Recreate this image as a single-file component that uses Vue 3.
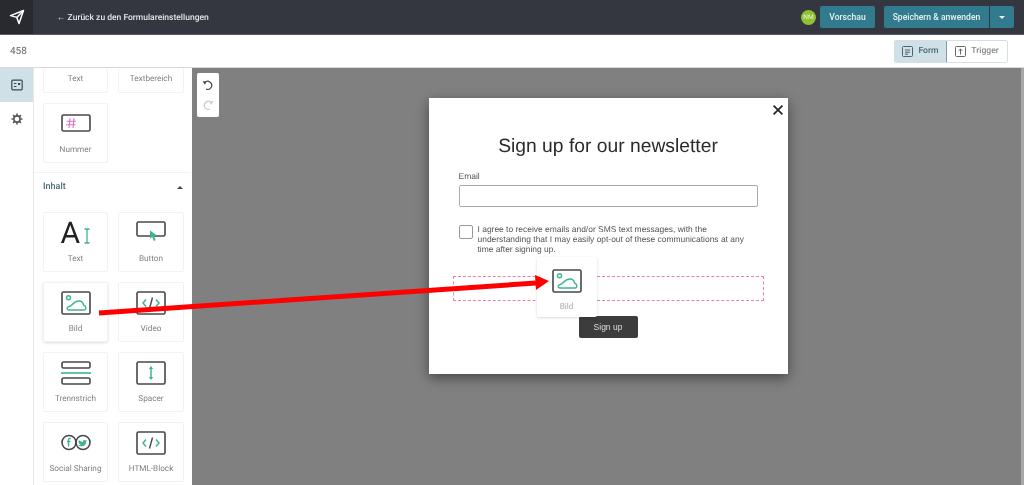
<script setup>
const topTiles = [{ label: 'Text' }, { label: 'Textbereich' }]
const contentTiles = [
  { label: 'Text', icon: 'text' },
  { label: 'Button', icon: 'button' },
  { label: 'Bild', icon: 'image', raised: true },
  { label: 'Video', icon: 'code' },
  { label: 'Trennstrich', icon: 'divider' },
  { label: 'Spacer', icon: 'spacer' },
  { label: 'Social Sharing', icon: 'social' },
  { label: 'HTML-Block', icon: 'code' }
]
const cloud = 'M8 19c-2.200 0-2.600-2.700-.4-3.200 1.700-.3 2.900-1.300 3.900-2.500C13.300 11.200 15.200 10 18 10c2.700 0 4.300 2.200 4.700 4.300 2.900.7 2.800 4.700.3 4.700z'
</script>

<template>
  <div class="page">
    <header class="topbar">
      <div class="logo">
        <svg width="16" height="16" viewBox="0 0 16 16" fill="none" stroke="#fff" stroke-width="1.5" stroke-linejoin="round"><path d="M1.5 6.600 14.500 1.500 10 14.500 7.800 8.400z" /><path d="M7.800 8.400 14.500 1.500" /></svg>
      </div>
      <div class="back">← Zurück zu den Formulareinstellungen</div>
      <div class="avatar">NM</div>
      <button class="teal preview">Vorschau</button>
      <div class="save-group">
        <button class="teal save">Speichern &amp; anwenden</button>
        <button class="teal caret"><span class="caret-down"></span></button>
      </div>
    </header>

    <div class="subbar">
      <span class="form-id">458</span>
      <div class="toggle">
        <div class="toggle-item active">
          <svg width="11" height="11" viewBox="0 0 11 11" fill="none" stroke="#4a6570" stroke-width="1"><rect x="0.5" y="0.500" width="10" height="10" rx="1" /><path d="M3 4h5M3 6.200h5M3 8.200h3" /></svg>
          Form
        </div>
        <div class="toggle-item">
          <svg width="11" height="11" viewBox="0 0 11 11" fill="none" stroke="#666" stroke-width="1"><rect x="0.5" y="0.500" width="10" height="10" rx="1" /><path d="M5.500 8.500V3M3.700 4.800l1.800-1.800 1.800 1.800" /></svg>
          Trigger
        </div>
      </div>
    </div>

    <div class="body">
      <nav class="rail">
        <div class="rail-item selected">
          <svg width="12" height="12" viewBox="0 0 12 12" fill="none" stroke="#3d4a50" stroke-width="1.200"><rect x="0.800" y="1.200" width="10.400" height="9.600" rx="1" /><path d="M2.800 4.500h2.600M2.800 7.500h2.600" /><rect x="7" y="4" width="2.200" height="2" fill="#3d4a50" stroke="none" /></svg>
        </div>
        <div class="rail-item">
          <svg width="12" height="12" viewBox="0 0 12 12" fill="none" stroke="#555" stroke-width="1.600"><circle cx="6" cy="6" r="3.100" /><path d="M6 0.500v2M6 9.500v2M0.500 6h2M9.500 6h2M2.100 2.100l1.400 1.400M8.500 8.500l1.400 1.400M2.100 9.900l1.400-1.400M8.500 3.500l1.400-1.400" /></svg>
        </div>
      </nav>

      <aside class="palette">
        <div class="tiles">
          <div v-for="t in topTiles" :key="t.label" class="tile clipped">
            <span class="tile-label">{{ t.label }}</span>
          </div>
          <div class="tile">
            <svg class="number-icon" width="30" height="18" viewBox="0 0 30 18" fill="none">
              <rect x="1" y="1" width="28" height="16" rx="1.500" stroke="#45484b" stroke-width="1.600" />
              <path d="M9 4 8 14M13 4l-1 10M5.500 7.200h9.500M5 10.800h9.500" stroke="#e070c8" stroke-width="1.100" />
            </svg>
            <span class="tile-label">Nummer</span>
          </div>
        </div>

        <div class="section-head">
          <span>Inhalt</span>
          <span class="caret-up"></span>
        </div>

        <div class="tiles content">
          <div v-for="t in contentTiles" :key="t.label" class="tile" :class="{ raised: t.raised }">
            <div v-if="t.icon === 'text'" class="text-icon">
              <span class="big-a">A</span>
              <svg width="8" height="24" viewBox="0 0 8 24" fill="none">
                <path d="M4 7v14M1.500 7h5M1.500 21h5" stroke="#3fb58f" stroke-width="1.300" />
              </svg>
            </div>
            <svg v-else width="30" height="24" viewBox="0 0 30 24" fill="none">
              <template v-if="t.icon === 'button'">
                <rect x="1" y="1" width="28" height="14" rx="1.500" stroke="#45484b" stroke-width="1.600" />
                <path d="M14 9.500l7 5-3 .6 1.600 4.200-1.800.7-1.600-4.100-2.200 1.600z" fill="#3fb58f" />
              </template>
              <template v-else-if="t.icon === 'image'">
                <rect x="1" y="1" width="28" height="22" rx="1.500" stroke="#45484b" stroke-width="1.600" />
                <circle cx="7.500" cy="6.800" r="2" stroke="#3fb58f" stroke-width="1.400" />
                <path :d="cloud" stroke="#3fb58f" stroke-width="1.400" />
              </template>
              <template v-else-if="t.icon === 'code'">
                <rect x="1" y="1" width="28" height="22" rx="1.500" stroke="#45484b" stroke-width="1.600" />
                <path d="M10 8.500 7 12l3 3.500M20 8.500l3 3.500-3 3.500" stroke="#3fb58f" stroke-width="1.500" />
                <path d="M16.500 6.500 13.500 17.500" stroke="#45484b" stroke-width="1.400" />
              </template>
              <template v-else-if="t.icon === 'divider'">
                <rect x="1" y="1" width="28" height="6" rx="1.500" stroke="#45484b" stroke-width="1.600" />
                <path d="M0 12h30" stroke="#3fb58f" stroke-width="1.600" />
                <rect x="1" y="17" width="28" height="6" rx="1.500" stroke="#45484b" stroke-width="1.600" />
              </template>
              <template v-else-if="t.icon === 'spacer'">
                <rect x="1" y="1" width="28" height="22" rx="1.500" stroke="#45484b" stroke-width="1.600" />
                <path d="M15 6v12" stroke="#3fb58f" stroke-width="1.500" />
                <path d="M12.800 8 15 5l2.200 3zM12.800 16l2.200 3 2.200-3z" fill="#3fb58f" />
              </template>
              <template v-else-if="t.icon === 'social'">
                <circle cx="8" cy="11.500" r="7" stroke="#45484b" stroke-width="1.600" />
                <circle cx="22" cy="11.500" r="7" stroke="#45484b" stroke-width="1.600" />
                <path d="M9.800 7.500H8.500c-.7 0-1 .4-1 1v7M6 10.500h3.400" stroke="#3fb58f" stroke-width="1.400" />
                <path d="M18 9c1 1.200 2.300 1.800 3.800 1.900-.2-1.600 1.800-2.700 3-1.400l1.200-.4-.7 1.200c0 3.300-2.700 5.500-5.600 5-1-.1-1.700-.4-2.300-.9 1 0 1.800-.3 2.400-.8-2-.5-2.900-2.800-1.800-4.600z" fill="#3fb58f" />
              </template>
            </svg>
            <span class="tile-label">{{ t.label }}</span>
          </div>
        </div>
      </aside>

      <main class="canvas">
        <div class="history">
          <svg width="12" height="12" viewBox="0 0 12 12" fill="none" stroke="#444" stroke-width="1.200"><path d="M2.800 3.600A4 4 0 1 1 4 10" /><path d="M0.500 2.200l4 .2-1.500 3.400z" fill="#444" stroke="none" /></svg>
          <svg width="12" height="12" viewBox="0 0 12 12" fill="none" stroke="#c8c8c8" stroke-width="1.200"><path d="M9.200 3.600A4 4 0 1 0 8 10" /><path d="M11.500 2.200l-4 .2 1.500 3.400z" fill="#c8c8c8" stroke="none" /></svg>
        </div>

        <section class="modal">
          <svg class="close" width="10" height="10" viewBox="0 0 10 10" fill="none" stroke="#222" stroke-width="1.700"><path d="M.6.600l8.800 8.800M9.400.6.600 9.400" /></svg>
          <h1>Sign up for our newsletter</h1>
          <label class="email-label">Email</label>
          <div class="email-input"></div>
          <div class="consent">
            <div class="checkbox"></div>
            <p>I agree to receive emails and/or SMS text messages, with the understanding that I may easily opt-out of these communications at any time after signing up.</p>
          </div>
          <div class="dropzone"></div>
          <button class="signup">Sign up</button>

          <div class="drag-tile">
            <svg width="30" height="24" viewBox="0 0 30 24" fill="none">
              <rect x="1" y="1" width="28" height="22" rx="1.500" stroke="#45484b" stroke-width="1.600" />
              <circle cx="7.500" cy="6.800" r="2" stroke="#3fb58f" stroke-width="1.400" />
              <path :d="cloud" stroke="#3fb58f" stroke-width="1.400" />
            </svg>
            <span class="tile-label faded">Bild</span>
          </div>
        </section>
      </main>
    </div>

    <svg class="arrow" width="1024" height="485" viewBox="0 0 1024 485">
      <path d="M99 313 536 283" stroke="#f00" stroke-width="5" />
      <path d="M535 275 549 281 536 290z" fill="#f00" />
    </svg>
  </div>
</template>

<style>
html, body { margin: 0; overflow: hidden; }
</style>

<style scoped>
.page {
  position: relative;
  width: 1024px;
  height: 485px;
  overflow: hidden;
  display: flex;
  flex-direction: column;
  font-family: Roboto, "Liberation Sans", sans-serif;
  text-rendering: geometricPrecision;
  background: #fff;
  filter: blur(0.5px);
}

.topbar {
  height: 35px;
  box-sizing: border-box;
  flex: none;
  display: flex;
  align-items: center;
  background: #343740;
  border-bottom: 1px solid #5a5c60;
}
.logo {
  width: 33px;
  height: 34px;
  display: flex;
  align-items: center;
  justify-content: center;
  background: #282a30;
}
.back {
  margin-left: 24px;
  flex: 1;
  font-size: 8.500px;
  font-weight: 500;
  color: #e4e5e7;
}
.avatar {
  width: 15px;
  height: 15px;
  border-radius: 50%;
  background: #8fc232;
  color: #e8f2d4;
  font-size: 6.500px;
  line-height: 15px;
  text-align: center;
  margin-right: 4px;
}
button {
  border: none;
  font-family: inherit;
  padding: 0;
}
.teal {
  height: 22px;
  background: #327a8e;
  color: #e8f0f2;
  font-size: 8.600px;
  font-weight: 500;
  border-radius: 2px;
}
.preview {
  width: 55px;
  margin-right: 9px;
}
.save-group {
  display: flex;
  margin-right: 10px;
}
.save {
  width: 105px;
  border-radius: 2px 0 0 2px;
}
.caret {
  width: 24px;
  margin-left: 1px;
  border-radius: 0 2px 2px 0;
  display: flex;
  align-items: center;
  justify-content: center;
}
.caret-down {
  border-left: 3px solid transparent;
  border-right: 3px solid transparent;
  border-top: 3px solid #e8f0f2;
}

.subbar {
  height: 33px;
  box-sizing: border-box;
  flex: none;
  display: flex;
  align-items: center;
  justify-content: space-between;
  padding: 0 16px 0 10px;
  border-bottom: 1px solid #d8d8d8;
}
.form-id {
  font-size: 10px;
  color: #666;
}
.toggle {
  display: flex;
  height: 21px;
  border: 1px solid #d5dfe3;
  border-radius: 2px;
}
.toggle-item {
  width: 60px;
  display: flex;
  align-items: center;
  justify-content: center;
  gap: 5px;
  font-size: 8.600px;
  font-weight: 500;
  color: #888;
}
.toggle-item.active {
  width: 52px;
  box-sizing: border-box;
  background: #cfe0e7;
  border-right: 1px solid #7ea0ac;
  color: #4a6570;
}

.body {
  flex: 1;
  min-height: 0;
  display: flex;
}
.rail {
  width: 34px;
  box-sizing: border-box;
  flex: none;
  border-right: 1px solid #e8e8e8;
}
.rail-item {
  height: 34px;
  display: flex;
  align-items: center;
  justify-content: center;
}
.rail-item.selected { background: #d0e0e7; }

.palette {
  width: 157px;
  flex: none;
  box-sizing: border-box;
}
.tiles {
  display: grid;
  grid-template-columns: 65px 66px;
  gap: 10px;
  padding: 0 0 9px 9px;
  border-bottom: 1px solid #f2f2f2;
}
.tiles.content {
  border-bottom: none;
}
.tile {
  height: 60px;
  box-sizing: border-box;
  border: 1px solid #f2f2f2;
  border-radius: 2px;
  display: flex;
  flex-direction: column;
  align-items: center;
  justify-content: space-between;
  padding: 8px 0 7px;
}
.tile.clipped {
  height: 25px;
  border-top: none;
  padding: 6px 0 0;
  justify-content: flex-start;
}
.tile.raised { box-shadow: 0 1px 3px rgba(0, 0, 0, 0.14); }
.number-icon { margin-top: 2px; }
.tile-label {
  font-size: 8.200px;
  line-height: 10px;
  color: #808080;
}
.tile-label.faded { color: #aaa; }
.text-icon {
  width: 30px;
  height: 24px;
  display: flex;
  justify-content: space-between;
  margin-top: 1px;
}
.big-a {
  font-size: 30px;
  line-height: 24px;
  color: #222;
}
.section-head {
  height: 39px;
  box-sizing: border-box;
  display: flex;
  align-items: center;
  justify-content: space-between;
  padding: 0 8px 11px 9px;
  font-size: 9px;
  font-weight: 500;
  color: #4c6a74;
}
.caret-up {
  border-left: 3px solid transparent;
  border-right: 3px solid transparent;
  border-bottom: 3px solid #3a4a50;
}

.canvas {
  flex: 1;
  position: relative;
  background: #808080;
  display: flex;
  justify-content: center;
  align-items: flex-start;
  border-right: 3px solid #a8a8a8;
  margin-left: 1px;
}
.history {
  position: absolute;
  left: 5px;
  top: 5px;
  width: 22px;
  height: 44px;
  background: #fff;
  border-radius: 2px;
  display: flex;
  flex-direction: column;
  align-items: center;
  justify-content: space-around;
  padding: 2px 0;
  box-sizing: border-box;
}

.modal {
  position: relative;
  width: 359px;
  height: 276px;
  margin: 30px 0 0 3px;
  padding: 37px 30px 0;
  box-sizing: border-box;
  background: #fff;
  box-shadow: 0 4px 12px rgba(0, 0, 0, 0.45);
  display: flex;
  flex-direction: column;
  font-family: "Liberation Sans", Arial, sans-serif;
}
.close {
  position: absolute;
  top: 7px;
  right: 5px;
}
h1 {
  margin: 0;
  font-size: 19.300px;
  line-height: 24px;
  font-weight: 400;
  text-align: center;
  color: #2b2b2b;
}
.email-label {
  margin-top: 11px;
  font-size: 8.500px;
  line-height: 12px;
  color: #555;
}
.email-input {
  margin-top: 3px;
  height: 22px;
  box-sizing: border-box;
  border: 1px solid #aaa;
  border-radius: 2px;
}
.consent {
  display: flex;
  margin-top: 17px;
  gap: 5px;
}
.checkbox {
  width: 14px;
  height: 14px;
  margin-top: 1px;
  flex: none;
  box-sizing: border-box;
  border: 1px solid #999;
  border-radius: 2px;
}
.consent p {
  margin: 0;
  width: 272px;
  font-size: 8.450px;
  line-height: 10px;
  color: #555;
}
.dropzone {
  margin: 22px -6px 0;
  height: 25px;
  box-sizing: border-box;
  border: 1px dashed #ec7fa2;
}
.signup {
  margin: 15px auto 0;
  width: 59px;
  height: 22px;
  background: #3c3c3c;
  color: #ddd;
  font-size: 8.500px;
  border-radius: 2px;
  font-family: inherit;
}
.drag-tile {
  position: absolute;
  left: 108px;
  top: 159px;
  width: 60px;
  height: 60px;
  box-sizing: border-box;
  background: #fff;
  border-radius: 2px;
  box-shadow: 0 1px 3px rgba(0, 0, 0, 0.15);
  display: flex;
  flex-direction: column;
  align-items: center;
  justify-content: space-between;
  padding: 12px 0 5px;
  font-family: Roboto, sans-serif;
}
.arrow {
  position: absolute;
  left: 0;
  top: 0;
  pointer-events: none;
}
</style>
